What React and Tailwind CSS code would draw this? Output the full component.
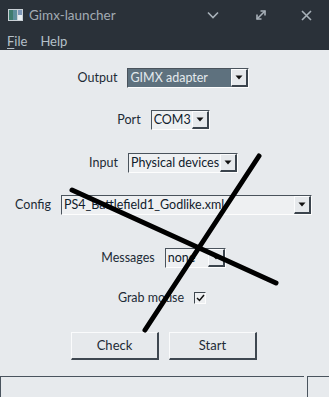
import React from 'react'

const FONT = { fontFamily: 'Lato, "Noto Sans", "DejaVu Sans", sans-serif' }

function Arrow() {
  return (
    <svg width="8" height="5" viewBox="0 0 8 5">
      <path d="M0.5 0.5 H7.5 L4 4.5 Z" fill="#111" />
    </svg>
  )
}

function Combo({ value, width, selected }) {
  return (
    <div
      className="flex h-[20px] border-t border-l border-t-[#4a535c] border-l-[#4a535c] border-b border-r border-b-[#fdfdfd] border-r-[#fdfdfd]"
      style={{ width }}
    >
      <div
        className={
          'flex-1 flex items-center pl-[2px] text-[12.5px] leading-none overflow-hidden whitespace-nowrap ' +
          (selected ? 'bg-[#5e717e] text-[#e3e9ed]' : 'bg-[#eef0f2] text-[#10202c]')
        }
      >
        {value}
      </div>
      <div className="w-[17px] shrink-0 flex items-center justify-center bg-[#e6e9ec] border-t border-l border-t-[#fbfcfd] border-l-[#fbfcfd] border-b-2 border-r-2 border-b-[#3b444d] border-r-[#3b444d]">
        <Arrow />
      </div>
    </div>
  )
}

function Row({ label, children, mt }) {
  return (
    <div className={'flex items-center justify-center gap-[10px] pr-[2px] ' + mt}>
      <span className="text-[12.5px] text-[#1d2a36] leading-none">{label}</span>
      {children}
    </div>
  )
}

function Btn({ children }) {
  return (
    <div className="w-[88px] h-[28px] flex items-center justify-center bg-[#e6e9ec] border-t border-l border-t-[#fafbfc] border-l-[#fafbfc] border-b-2 border-r-2 border-b-[#3e4750] border-r-[#3e4750] text-[13px] text-[#1d2a36]">
      {children}
    </div>
  )
}

export default function App() {
  return (
    <div className="relative w-[329px] h-[397px] overflow-hidden bg-[#e7eaed] flex flex-col" style={FONT}>
      {/* title bar */}
      <div className="h-[30px] bg-[#2a3139] flex items-center pl-[8px] pr-[17px]">
        <svg width="15" height="12" viewBox="0 0 15 12" className="mr-[6px]">
          <rect x="0" y="0" width="15" height="12" fill="#c9d0d6" />
          <rect x="1" y="1" width="8" height="10" fill="#5f8f9c" />
          <rect x="1" y="1" width="4" height="10" fill="#3f7b6e" />
          <rect x="10" y="1" width="4" height="10" fill="#7f98b8" />
          <rect x="10" y="6" width="4" height="5" fill="#e8eef2" />
        </svg>
        <span className="text-[13.5px] text-[#a2abb3]">Gimx-launcher</span>
        <div className="flex-1" />
        <svg width="12" height="8" viewBox="0 0 12 8" className="mr-[36px]">
          <path d="M1 1.5 L6 6.5 L11 1.5" stroke="#a8b1b9" strokeWidth="1.6" fill="none" />
        </svg>
        <svg width="12" height="12" viewBox="0 0 12 12" className="mr-[34px]">
          <path d="M2 10 L10 2" stroke="#a8b1b9" strokeWidth="1.6" />
          <path d="M5.5 2 H10 V6.5" stroke="#a8b1b9" strokeWidth="1.6" fill="none" />
          <path d="M2 5.5 V10 H6.5" stroke="#a8b1b9" strokeWidth="1.6" fill="none" />
        </svg>
        <svg width="11" height="11" viewBox="0 0 11 11">
          <path d="M1 1 L10 10 M10 1 L1 10" stroke="#a8b1b9" strokeWidth="1.6" />
        </svg>
      </div>
      {/* menu bar */}
      <div className="h-[20px] bg-[#2a3139] flex items-start pl-[7px] gap-[13px] text-[13px] text-[#b5c0c9] leading-none">
        <span className="pt-[5px]"><span className="underline underline-offset-2">F</span>ile</span>
        <span className="pt-[5px]">Help</span>
      </div>

      {/* form */}
      <Row label="Output" mt="mt-[18px]">
        <Combo value="GIMX adapter" width={122} selected />
      </Row>
      <Row label="Port" mt="mt-[22px]">
        <Combo value="COM3" width={59} />
      </Row>
      <Row label="Input" mt="mt-[23px]">
        <Combo value="Physical devices" width={110} />
      </Row>
      <Row label="Config" mt="mt-[22px]">
        <Combo value="PS4_Battlefield1_Godlike.xml" width={251} />
      </Row>
      <Row label="Messages" mt="mt-[33px]">
        <Combo value="none" width={61} />
      </Row>
      <div className="flex items-center justify-center gap-[10px] mt-[20px] h-[20px] pr-[5px]">
        <span className="text-[12.5px] text-[#1d2a36] leading-none">Grab mouse</span>
        <div className="w-[12px] h-[12px] bg-[#eef0f2] border-t border-l border-t-[#3f4850] border-l-[#3f4850] border-b border-r border-b-[#fdfdfd] border-r-[#fdfdfd] flex items-center justify-center">
          <svg width="9" height="8" viewBox="0 0 9 8">
            <path d="M1 4 L3.5 6.5 L8 1" stroke="#111" strokeWidth="1.5" fill="none" />
          </svg>
        </div>
      </div>
      <div className="flex justify-center gap-[10px] mt-[24px] pr-[1px]">
        <Btn>Check</Btn>
        <Btn>Start</Btn>
      </div>

      {/* status bar */}
      <div className="mt-auto h-[21px] flex gap-[3px]">
        <div className="w-[304px] border-t border-l border-[#4a545e]" />
        <div className="flex-1 border-t border-l border-[#4a545e]" />
      </div>

      {/* crossing strokes */}
      <svg className="absolute inset-0 pointer-events-none" width="329" height="397" viewBox="0 0 329 397">
        <path d="M72 190 L276 283" stroke="#000" strokeWidth="5" strokeLinecap="round" />
        <path d="M259 156 L145 330" stroke="#000" strokeWidth="5" strokeLinecap="round" />
      </svg>
    </div>
  )
}
